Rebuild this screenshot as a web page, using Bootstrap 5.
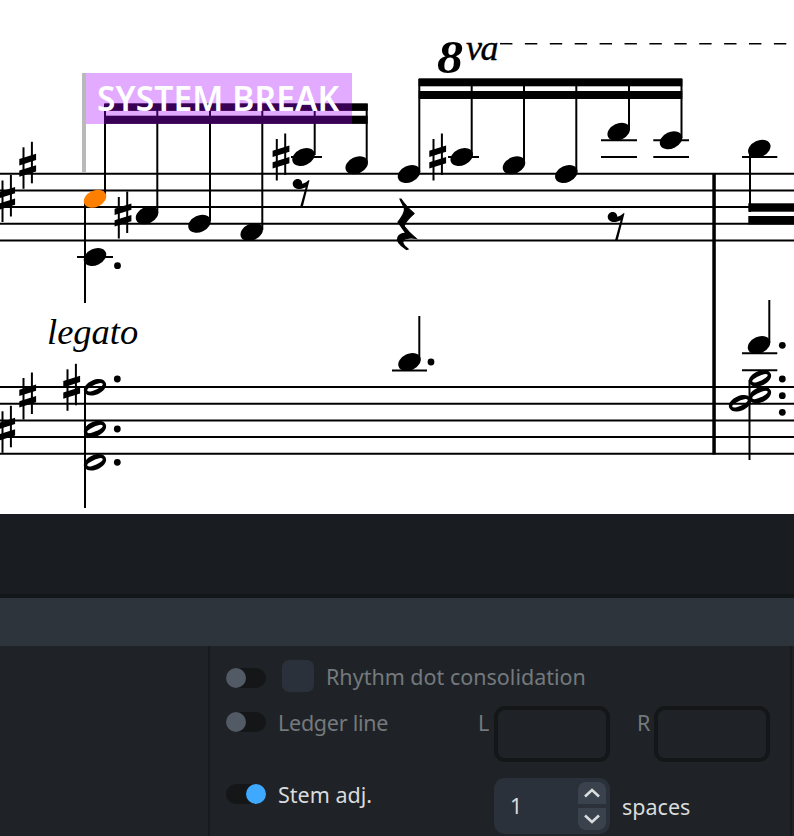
<!DOCTYPE html>
<html lang="en">
<head>
    <meta charset="UTF-8">
    <meta name="viewport" content="width=device-width, initial-scale=1.0">
    <title>Engrave mode</title>
    <link rel="stylesheet" href="https://cdn.jsdelivr.net/npm/bootstrap@5.3.3/dist/css/bootstrap.min.css">
    <style>
        body { background: #1f2327; font-family: "Noto Sans", "Liberation Sans", sans-serif; overflow: hidden; }
        .score-area { height: 514px; background: #fff; }
        .score-area svg { display: block; }
        .stafflines line, .ledger line { stroke: #000; stroke-width: 2; }
        .stems line { stroke: #000; stroke-width: 2; }
        .serif-it { font-family: "Liberation Serif", serif; font-style: italic; }
        .break-flag { left: 82px; top: 73px; width: 270px; height: 51px; background: rgba(168, 0, 255, .33); border-left: 4px solid #b9b9b9; color: #fff; font-weight: 600; font-size: 33.5px; line-height: 50px; padding-left: 11px; letter-spacing: .1px; white-space: nowrap; }
        .break-pole { left: 82px; top: 124px; width: 4px; height: 49px; background: #b9b9b9; }
        .dark-strip { height: 84px; background: #191c20; border-bottom: 4px solid #14171a; }
        .tab-band { height: 48px; background: #2d343c; }
        .prop-panel { height: 190px; background: #1f2327; }
        .side-col { width: 210px; border-right: 2px solid #181b1e; }
        .main-col { width: 582px; border-right: 2px solid #181b1e; padding: 14px 0 0 16px; gap: 14px; font-size: 21.5px; }
        .prop-row { height: 32px; }
        .prop-row.tall { height: 56px; margin-top: 2px; }
        .prop-row.tall.first { margin-top: 0; }
        .tog { width: 40px; height: 20px; background: #141618; margin-top: 8px; }
        .tall .tog { margin-top: 6px; }
        .knob { width: 20px; height: 20px; background: #515a65; }
        .knob.on { background: #3fa9ff; }
        .check-box { width: 32px; height: 32px; background: #2a313a; margin-left: 16px; margin-right: 12px; border-radius: 7px; }
        .dim-label { color: #74797d; line-height: 34px; }
        .on-label { color: #d9dbdc; line-height: 34px; }
        .label-col { width: 216px; margin-left: 12px; flex-shrink: 0; }
        .short-label { width: 200px; letter-spacing: -.25px; }
        .len-l { width: 10px; margin-right: 6px; }
        .len-r { margin-left: 27px; margin-right: 4px; }
        .len-box.form-control { width: 116px; height: 56px; background: #1f2327; border: 4px solid #141618; border-radius: 11px; padding: 0; }
        .len-box.form-control:disabled { background: #1f2327; }
        .stepper { width: 116px; height: 56px; background: #2a313a; border-radius: 11px; padding: 4px 4px 4px 16px; color: #d9dbdc; }
        .step-btn { width: 28px; height: 22px; background: #3a434d; }
        .step-up { border-radius: 8px 8px 0 0; }
        .step-down { border-radius: 0 0 8px 8px; }
        .stepper-unit { margin-left: 12px; align-self: center; padding-top: 2px; }
    </style>
</head>
<body>
    <div class="score-area position-relative">
        <svg width="794" height="514" viewBox="0 0 794 514" xmlns="http://www.w3.org/2000/svg">
            <defs>
                <ellipse id="nh" rx="11.8" ry="8.2" transform="rotate(-25)"/>
                <path id="hn" fill-rule="evenodd" d="M-10.6 4.8C-12.8 0.4-7.8-4.8-2.6-6.9 2.6-9 8.6-9 10.6-4.8 12.8-0.4 7.8 4.8 2.6 6.9-2.6 9-8.6 9-10.6 4.8ZM-7.6 3.5C-6.6 5.2-2.6 3.9 1.3 2.1 5.2.3 8.5-1.9 7.6-3.5 6.6-5.2 2.6-3.9-1.3-2.1-5.2-.3-8.5 1.9-7.6 3.5Z"/>
                <g id="sharp">
                    <line x1="-4.2" y1="-18" x2="-4.2" y2="23.5" stroke="#000" stroke-width="2"/>
                    <line x1="4.2" y1="-23.5" x2="4.2" y2="18" stroke="#000" stroke-width="2"/>
                    <path d="M-8.4-6.2L8.4-11.5V-5.2L-8.4 0.1ZM-8.4 5.2L8.4 -0.1V6.2L-8.4 11.5Z"/>
                </g>
                <path id="rest8" d="M11.8-3.8L5 23H2.4L7.9 3.2C5 4.8 2 5.4-1 4.8-3.2 4.2-5 2.2-5 0-5-2.8-2.8-5 0-5 2.8-5 4.8-2.8 4.5-.2 6.8-.6 9-2 10.6-3.8Z"/>
            </defs>

            <g class="stafflines">
                <line x1="0" x2="794" y1="173.7" y2="173.7"/>
                <line x1="0" x2="794" y1="190.4" y2="190.4"/>
                <line x1="0" x2="794" y1="207" y2="207"/>
                <line x1="0" x2="794" y1="223.7" y2="223.7"/>
                <line x1="0" x2="794" y1="240.4" y2="240.4"/>
                <line x1="0" x2="794" y1="387" y2="387"/>
                <line x1="0" x2="794" y1="403.7" y2="403.7"/>
                <line x1="0" x2="794" y1="420.4" y2="420.4"/>
                <line x1="0" x2="794" y1="437" y2="437"/>
                <line x1="0" x2="794" y1="453.7" y2="453.7"/>
            </g>

            <!-- key signatures -->
            <use href="#sharp" x="27.7" y="165.3"/>
            <use href="#sharp" x="6.7" y="198.5"/>
            <use href="#sharp" x="27.7" y="396"/>
            <use href="#sharp" x="6.7" y="429.3"/>

            <!-- barline -->
            <rect x="712.3" y="173" width="3.5" height="281.5"/>

            <g class="ledger">
                <line x1="77" x2="113" y1="257" y2="257"/>
                <line x1="291" x2="322" y1="157" y2="157"/>
                <line x1="448" x2="479" y1="157" y2="157"/>
                <line x1="601" x2="637" y1="140.3" y2="140.3"/>
                <line x1="601" x2="637" y1="157" y2="157"/>
                <line x1="653.3" x2="689" y1="140.3" y2="140.3"/>
                <line x1="653.3" x2="689" y1="157" y2="157"/>
                <line x1="742" x2="777.3" y1="157" y2="157"/>
                <line x1="392" x2="427" y1="370.5" y2="370.5"/>
                <line x1="742" x2="777.3" y1="353.3" y2="353.3"/>
                <line x1="742" x2="777.3" y1="370.3" y2="370.3"/>
            </g>

            <g class="stems">
                <line x1="105" x2="105" y1="196" y2="104"/>
                <line x1="85" x2="85" y1="200" y2="303"/>
                <line x1="157.3" x2="157.3" y1="213" y2="104"/>
                <line x1="210" x2="210" y1="221" y2="104"/>
                <line x1="262.3" x2="262.3" y1="230" y2="104"/>
                <line x1="314.7" x2="314.7" y1="155" y2="104"/>
                <line x1="366.7" x2="366.7" y1="163" y2="104"/>
                <line x1="419.3" x2="419.3" y1="172" y2="79"/>
                <line x1="471.7" x2="471.7" y1="155" y2="79"/>
                <line x1="524" x2="524" y1="163" y2="79"/>
                <line x1="576.3" x2="576.3" y1="172" y2="79"/>
                <line x1="629" x2="629" y1="130" y2="79"/>
                <line x1="681.5" x2="681.5" y1="138" y2="79"/>
                <line x1="750" x2="750" y1="150" y2="212"/>
                <line x1="419.3" x2="419.3" y1="360" y2="316"/>
                <line x1="85" x2="85" y1="388" y2="508"/>
                <line x1="769.3" x2="769.3" y1="343" y2="300"/>
                <line x1="749.5" x2="749.5" y1="380" y2="460"/>
            </g>

            <!-- beams -->
            <rect x="104.3" y="103.3" width="263.4" height="7.6"/>
            <rect x="104.3" y="115.7" width="263.4" height="8.2"/>
            <rect x="418.7" y="78.3" width="263.6" height="8"/>
            <rect x="418.7" y="91" width="263.6" height="8"/>
            <rect x="748.3" y="203.3" width="46" height="8.4"/>
            <rect x="748.3" y="216" width="46" height="8.4"/>

            <!-- upper staff notes -->
            <use href="#nh" x="95" y="198.7" fill="#ff8000"/>
            <use href="#nh" x="95" y="257"/>
            <use href="#nh" x="147" y="215.3"/>
            <use href="#nh" x="199.5" y="223.7"/>
            <use href="#nh" x="251.7" y="232"/>
            <use href="#nh" x="303.5" y="157"/>
            <use href="#nh" x="356.7" y="165.3"/>
            <use href="#nh" x="409" y="174"/>
            <use href="#nh" x="461.7" y="157"/>
            <use href="#nh" x="514" y="165.3"/>
            <use href="#nh" x="566.3" y="174"/>
            <use href="#nh" x="618.7" y="131.7"/>
            <use href="#nh" x="671" y="140.3"/>
            <use href="#nh" x="759.3" y="148.7"/>
            <circle cx="117.5" cy="265.7" r="3.4"/>
            <use href="#sharp" x="123" y="215"/>
            <use href="#sharp" x="281" y="157"/>
            <use href="#sharp" x="437.7" y="157"/>

            <!-- rests -->
            <use href="#rest8" x="297.7" y="184"/>
            <use href="#rest8" x="612.7" y="217"/>
            <path stroke="#000" stroke-width="1.2" d="M400 199L401 199C405 205 409 209 414 213.5 409 218 405 222 404 226 407 230 412 235 416 238.5 411 237.5 405 238 403 240.5 402 243 404 246 408 249L406.5 249.5C401 246 396 241 398 237 399 234 403 233 406 233.5L398 222C402 217 405 213 404.5 209 404 206 401 202 400 199Z"/>

            <!-- lower staff notes -->
            <use href="#sharp" x="71.7" y="387.3"/>
            <use href="#hn" x="95" y="387.3"/>
            <use href="#hn" x="95" y="429"/>
            <use href="#hn" x="95" y="462.3"/>
            <circle cx="117.3" cy="379" r="3.4"/>
            <circle cx="117.3" cy="429" r="3.4"/>
            <circle cx="117.3" cy="462.3" r="3.4"/>
            <use href="#nh" x="409.5" y="362"/>
            <circle cx="431" cy="362" r="3.4"/>
            <use href="#nh" x="759" y="345"/>
            <circle cx="782.3" cy="345.3" r="3.4"/>
            <use href="#hn" x="760" y="378.3"/>
            <use href="#hn" x="760" y="395"/>
            <use href="#hn" x="740" y="403.3"/>
            <circle cx="782.3" cy="379" r="3.4"/>
            <circle cx="782.3" cy="395.7" r="3.4"/>
            <circle cx="782.3" cy="412.3" r="3.4"/>

            <!-- text items -->
            <text class="serif-it" x="47" y="344" font-size="36.5">legato</text>
            <text class="serif-it" x="437" y="73" font-size="46" font-weight="700" textLength="26" lengthAdjust="spacingAndGlyphs">8</text>
            <text class="serif-it" x="466" y="59.5" font-size="36" letter-spacing="-1.5" stroke="#000" stroke-width=".4">va</text>
            <line x1="500" x2="794" y1="43.7" y2="43.7" stroke="#000" stroke-width="1.5" stroke-dasharray="12.4 12.5"/>
        </svg>
        <div class="break-pole position-absolute"></div>
        <div class="break-flag position-absolute">SYSTEM BREAK</div>
    </div>

    <div class="dark-strip"></div>
    <div class="tab-band"></div>

    <div class="prop-panel d-flex">
        <div class="side-col flex-shrink-0"></div>
        <div class="main-col d-flex flex-column flex-shrink-0">
            <div class="prop-row d-flex align-items-start">
                <div class="tog rounded-pill d-flex justify-content-start"><span class="knob rounded-circle"></span></div>
                <div class="check-box flex-shrink-0"></div>
                <span class="dim-label text-nowrap">Rhythm dot consolidation</span>
            </div>
            <div class="prop-row tall first d-flex align-items-start">
                <div class="tog rounded-pill d-flex justify-content-start"><span class="knob rounded-circle"></span></div>
                <span class="dim-label label-col short-label">Ledger line</span>
                <span class="dim-label len-l">L</span>
                <input class="form-control len-box" type="text" disabled>
                <span class="dim-label len-r">R</span>
                <input class="form-control len-box" type="text" disabled>
            </div>
            <div class="prop-row tall d-flex align-items-start">
                <div class="tog rounded-pill d-flex justify-content-end"><span class="knob on rounded-circle"></span></div>
                <span class="on-label label-col">Stem adj.</span>
                <div class="stepper d-flex align-items-center justify-content-between">
                    <span>1</span>
                    <div class="d-flex flex-column gap-1">
                        <div class="step-btn step-up d-flex align-items-center justify-content-center">
                            <svg width="18" height="10" viewBox="0 0 18 10"><path d="M2 8.5L9 2l7 6.5" fill="none" stroke="#d9dbdc" stroke-width="2.6"/></svg>
                        </div>
                        <div class="step-btn step-down d-flex align-items-center justify-content-center">
                            <svg width="18" height="10" viewBox="0 0 18 10"><path d="M2 1.5L9 8l7-6.5" fill="none" stroke="#d9dbdc" stroke-width="2.6"/></svg>
                        </div>
                    </div>
                </div>
                <span class="on-label stepper-unit">spaces</span>
            </div>
        </div>
    </div>
</body>
</html>
